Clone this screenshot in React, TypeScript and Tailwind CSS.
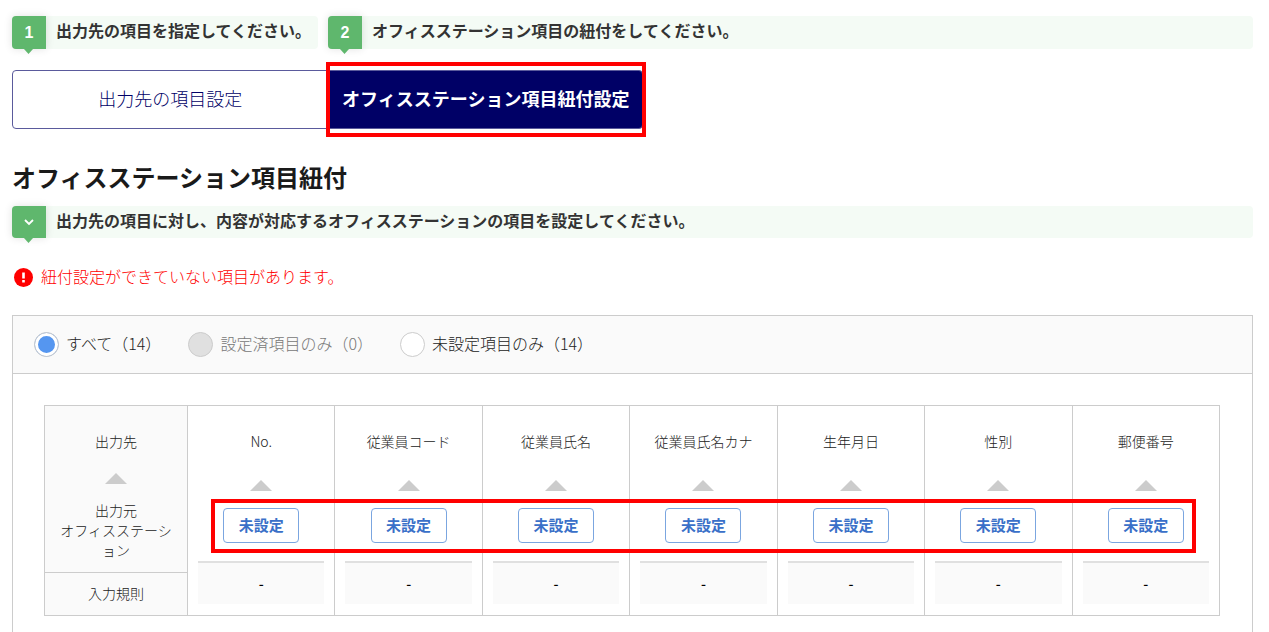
import React, { useState } from 'react';

const COLUMNS = ['No.', '従業員コード', '従業員氏名', '従業員氏名カナ', '生年月日', '性別', '郵便番号'];

const FILTERS = [
  { id: 'all', label: 'すべて（14）', disabled: false },
  { id: 'done', label: '設定済項目のみ（0）', disabled: true },
  { id: 'todo', label: '未設定項目のみ（14）', disabled: false },
];

interface StepProps {
  marker: React.ReactNode;
  text: string;
  className?: string;
}

const Step: React.FC<StepProps> = ({ marker, text, className = '' }) => (
  <div className={`flex rounded bg-[#f4fbf5] ${className}`}>
    <div className="relative flex w-[34px] shrink-0 items-center justify-center rounded-l bg-[#5fb76d] font-['Liberation_Sans',sans-serif] text-base font-bold text-white shadow-[0_0_8px_rgba(0,0,0,0.12)]">
      {marker}
      {/* Pointer under the badge */}
      <svg className="absolute top-full left-3" width="9" height="5" viewBox="0 0 9 5" aria-hidden="true">
        <path d="M0 0h9L4.5 5z" fill="#5fb76d" />
      </svg>
    </div>
    <p className="pt-[2px] pl-[10px] text-base leading-6 font-bold whitespace-nowrap text-[#333]">{text}</p>
  </div>
);

const UpArrow = () => (
  <svg className="mx-auto block" width="22" height="11" viewBox="0 0 22 11" aria-hidden="true">
    <path d="M11 0l11 11H0z" fill="#ccc" />
  </svg>
);

const App: React.FC = () => {
  const [tab, setTab] = useState<'output' | 'link'>('link');
  const [filter, setFilter] = useState('all');

  const tabClass = (active: boolean) =>
    active ? 'bg-[#000066] font-bold text-white' : 'bg-white font-light text-[#000066]';

  return (
    <main className="bg-white pt-4 pr-4 pl-3 font-['Noto_Sans_CJK_JP',sans-serif] text-[#222]">
      <div className="flex gap-[10px]">
        <Step marker="1" text="出力先の項目を指定してください。" className="h-[33px] w-[306px]" />
        <Step marker="2" text="オフィスステーション項目の紐付をしてください。" className="h-[33px] flex-1" />
      </div>

      {/* Tabs */}
      <div className="mt-[21px] flex max-w-[631px]">
        <button
          type="button"
          onClick={() => setTab('output')}
          className={`h-[59px] flex-1 rounded-l border border-[#5a5a9c] pb-1 text-lg ${tabClass(tab === 'output')}`}
        >
          出力先の項目設定
        </button>
        <div className="relative flex-1">
          <button
            type="button"
            onClick={() => setTab('link')}
            className={`h-[59px] w-full rounded-r border border-[#5a5a9c] pb-1 text-lg ${tabClass(tab === 'link')}`}
          >
            オフィスステーション項目紐付設定
          </button>
          <div className="pointer-events-none absolute -inset-x-[3px] -inset-y-2 border-4 border-[#ff0000]" />
        </div>
      </div>

      <h1 className="mt-8 text-2xl leading-8 font-bold text-[#1a1a1a]">オフィスステーション項目紐付</h1>

      <Step
        className="mt-[13px] h-8"
        text="出力先の項目に対し、内容が対応するオフィスステーションの項目を設定してください。"
        marker={
          <svg width="10" height="7" viewBox="0 0 10 7" fill="none" stroke="#fff" strokeWidth="1.8" aria-hidden="true">
            <path d="M1 1l4 4 4-4" />
          </svg>
        }
      />

      <p className="mt-6 flex items-center gap-2 pl-[2px] text-base leading-7 font-light text-[#ff0000]">
        <svg width="19" height="19" viewBox="0 0 19 19" aria-hidden="true">
          <circle cx="9.5" cy="9.5" r="9.5" fill="#f00" />
          <path d="M8.2 4.5h2.6v6H8.2zM8.2 12h2.6v2.5H8.2z" fill="#fff" />
        </svg>
        <span className="pb-[2px]">紐付設定ができていない項目があります。</span>
      </p>

      <section className="mt-[23px] border border-[#ccc]">
        <div className="flex h-[58px] items-center gap-[27px] border-b border-[#ccc] bg-[#fafafa] px-[21px]">
          {FILTERS.map((f) => (
            <label
              key={f.id}
              className={`flex items-center gap-[7px] text-base font-light ${f.disabled ? 'text-[#777]' : 'text-[#222]'}`}
            >
              <input
                type="radio"
                name="filter"
                value={f.id}
                disabled={f.disabled}
                checked={filter === f.id}
                onChange={() => setFilter(f.id)}
                className="size-[25px] appearance-none rounded-full border border-[#ccc] bg-white checked:bg-[#5596f0] checked:shadow-[inset_0_0_0_3px_#fff] disabled:bg-[#e0e0e0]"
              />
              <span className="pb-1">{f.label}</span>
            </label>
          ))}
        </div>

        <div className="relative mr-8 mb-[31px] ml-[31px] pt-[31px]">
          <table className="w-full table-fixed border-collapse text-center text-sm leading-5">
            <tbody>
              <tr>
                <th scope="row" className="h-[167px] w-[143px] border border-[#ccc] bg-[#fafafa] px-3 pt-[25px] pb-0 align-top font-light">
                  <div>出力先</div>
                  <div className="py-[22px] pb-4">
                    <UpArrow />
                  </div>
                  <div className="[line-break:anywhere]">
                    出力元
                    <br />
                    オフィスステーション
                  </div>
                </th>
                {COLUMNS.map((name) => (
                  <td key={name} rowSpan={2} className="border border-[#ccc] px-[10px] pt-[25px] pb-[11px] align-top">
                    <div className="font-light">{name}</div>
                    <div className="pt-[29px] pb-[17px]">
                      <UpArrow />
                    </div>
                    <button
                      type="button"
                      className="mx-auto block h-[35px] w-[76px] rounded border border-[#7ba6e0] bg-white pb-[2px] text-[15px] font-bold text-[#3a70c8]"
                    >
                      未設定
                    </button>
                    <div className="mt-[18px] h-[43px] border-t-2 border-[#e0e0e0] bg-[#fafafa] pt-[10px] font-medium text-black">-</div>
                  </td>
                ))}
              </tr>
              <tr>
                <th scope="row" className="h-[43px] border border-[#ccc] bg-[#fafafa] pb-[3px] font-light">
                  入力規則
                </th>
              </tr>
            </tbody>
          </table>
          <div className="pointer-events-none absolute top-[125px] right-6 left-[167px] h-[54px] border-4 border-[#ff0000]" />
        </div>
      </section>
    </main>
  );
};

export default App;
